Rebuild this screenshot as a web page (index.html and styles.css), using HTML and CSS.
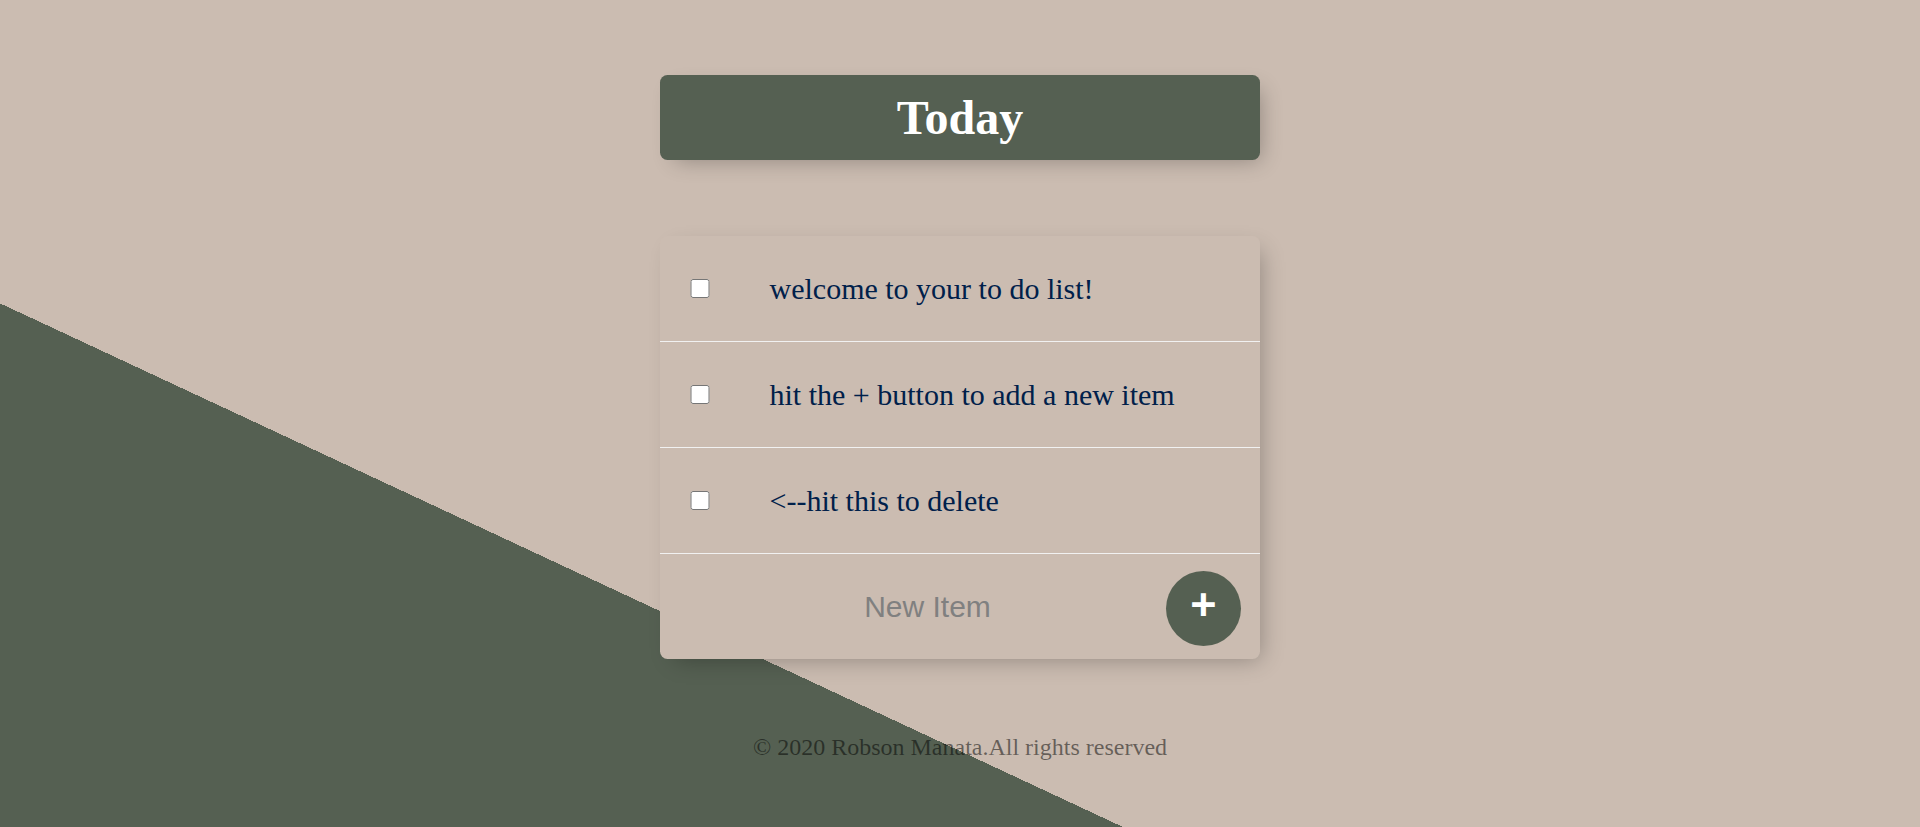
FILE: index.html
```html
<!DOCTYPE html>
<html lang="en">
<head>
<meta charset="utf-8">
<title>To Do List</title>
<link rel="stylesheet" href="styles.css">
</head>
<body>
  <div class="box heading">
    <h1 class="title">Today</h1>
  </div>

  <div class="box list">
    <div class="item">
      <input class="check" type="checkbox">
      <p class="item-text">welcome to your to do list!</p>
    </div>
    <div class="item">
      <input class="check" type="checkbox">
      <p class="item-text">hit the + button to add a new item</p>
    </div>
    <div class="item">
      <input class="check" type="checkbox">
      <p class="item-text">&lt;--hit this to delete</p>
    </div>
    <form class="new-form" action="#">
      <input class="new-input" type="text" name="newItem" placeholder="New Item" autocomplete="off">
      <button class="add-btn" type="button">+</button>
    </form>
  </div>

  <footer class="footer">© 2020 Robson Manata.All rights reserved</footer>
</body>
</html>
```
FILE: styles.css
```css
html {
  min-height: 1502px;
  background-color: #cbbcb1;
  background-image: linear-gradient(25deg, #556052 50%, #cbbcb1 50%);
}

body {
  margin: 0 12px;
  padding-top: 1px;
  font-family: "Liberation Serif", "Times New Roman", serif;
}

.box {
  max-width: 600px;
  margin: 74px auto 75px;
  border-radius: 7.5px;
  box-shadow: 7.5px 7.5px 22.5px -7.5px rgba(0, 0, 0, 0.3);
}

.heading {
  background-color: #556052;
  text-align: center;
}

.title {
  margin: 0;
  padding: 15px;
  color: #ffffff;
  font-size: 48px;
  font-weight: bold;
}

.list {
  margin-top: 76px;
  background-color: #cbbcb1;
}

.item {
  min-height: 105px;
  display: flex;
  align-items: center;
  border-bottom: 1px solid #f1f1f1;
}

.check {
  margin: 30px;
  width: 19.5px;
  height: 19.5px;
  flex-shrink: 0;
}

.item-text {
  margin: 0;
  padding: 30px;
  font-size: 30px;
  color: #00204a;
}

.new-form {
  height: 105px;
  display: flex;
  align-items: center;
  justify-content: flex-end;
  gap: 6px;
  padding-right: 19px;
}

.new-input {
  box-sizing: border-box;
  width: 465px;
  height: 90px;
  border: none;
  padding: 0;
  background: transparent;
  text-align: center;
  font-family: "Liberation Sans", Arial, sans-serif;
  font-size: 30px;
  color: #00204a;
}

.new-input::placeholder {
  color: grey;
  opacity: 1;
}

.new-input:focus {
  outline: none;
  box-shadow: inset 0 -4.5px 0 0 #556052;
}

.add-btn {
  width: 75px;
  height: 75px;
  margin-top: 4px;
  border: 0;
  border-radius: 50%;
  padding: 0 0 9px 0;
  background-color: #556052;
  color: #ffffff;
  font-family: "Liberation Sans", Arial, sans-serif;
  font-size: 45px;
  font-weight: bold;
  line-height: 1;
}

.footer {
  text-align: center;
  font-size: 24px;
  color: rgba(0, 0, 0, 0.5);
}
```
